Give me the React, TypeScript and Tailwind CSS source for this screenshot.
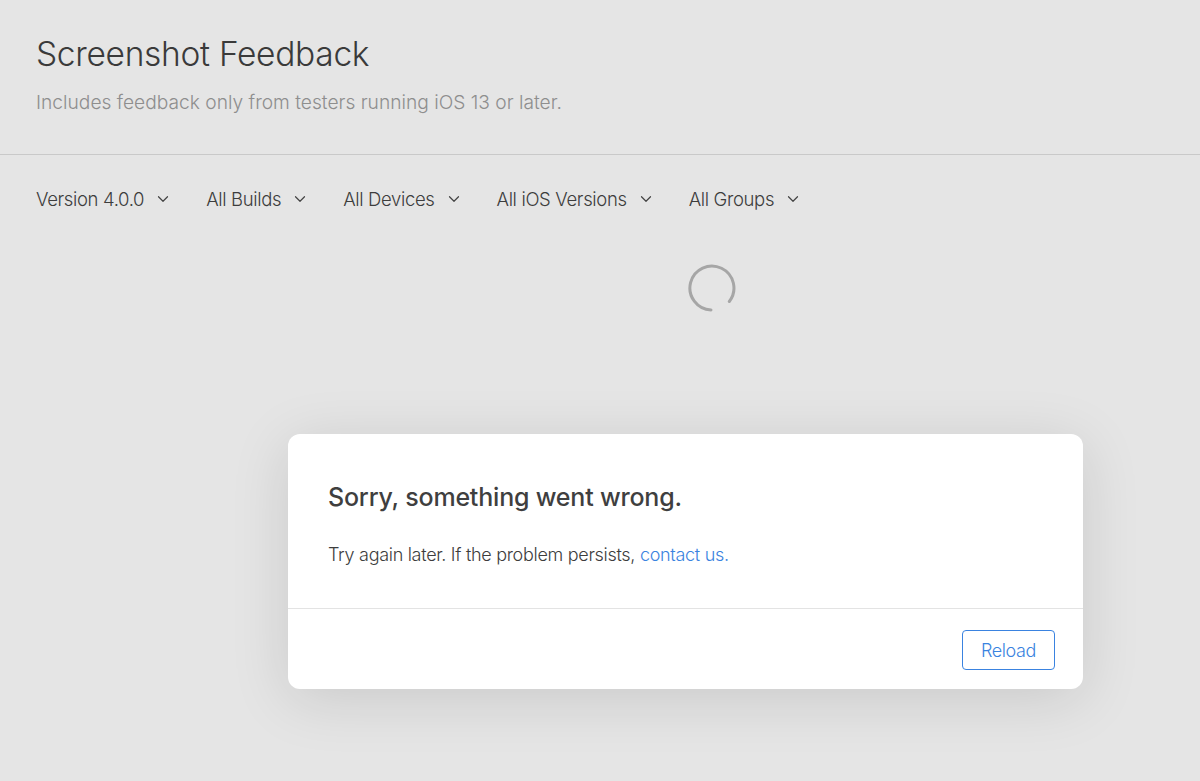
import { ChevronDown } from 'lucide-react';

const filters = ['Version 4.0.0', 'All Builds', 'All Devices', 'All iOS Versions', 'All Groups'];

function Spinner() {
  // open ring, gap toward the lower right
  return (
    <svg width="52" height="52" viewBox="0 0 52 52" fill="none">
      <path
        d="M25 48 A22 22 0 1 1 43.3 39.5"
        stroke="#a6a6a6"
        strokeWidth="3"
        strokeLinecap="round"
      />
    </svg>
  );
}

export default function App() {
  return (
    <div
      className="relative h-[781px] w-[1200px] overflow-hidden bg-[#e5e5e5] text-[#3d3d3d]"
      style={{ fontFamily: 'Inter, "Noto Sans", sans-serif' }}
    >
      <header className="border-b border-[#c9c9c9] px-9 pt-[32px] pb-[38px]">
        <h1 className="text-[33.5px] font-light leading-[44px] tracking-[-0.3px] text-[#3a3a3a]">
          Screenshot Feedback
        </h1>
        <p className="mt-[12px] text-[19.2px] font-light leading-[28px] text-[#8e8e8e]">
          Includes feedback only from testers running iOS 13 or later.
        </p>
      </header>

      <nav className="flex items-center gap-[34px] px-9 pt-[30px]">
        {filters.map((f) => (
          <button
            key={f}
            className="flex items-center gap-[10px] text-[18.5px] font-light leading-[28px] tracking-[-0.35px] text-[#3d3d3d]"
          >
            {f}
            <ChevronDown className="h-[18px] w-[18px] text-[#444]" strokeWidth={1.6} />
          </button>
        ))}
      </nav>

      <div className="flex justify-center pt-[49px] pl-[224px]">
        <Spinner />
      </div>

      <div className="absolute left-[288px] top-[434px] w-[795px] rounded-[12px] bg-white shadow-[0_10px_60px_rgba(0,0,0,0.12)]">
        <div className="px-10 pt-[47px] pb-[39px]">
          <h2 className="text-[25px] font-medium leading-[32px] tracking-[-0.2px] text-[#3f3f3f]">
            Sorry, something went wrong.
          </h2>
          <p className="mt-[28px] text-[18px] font-light leading-[28px] tracking-[-0.3px] text-[#3d3d3d]">
            Try again later. If the problem persists,{' '}
            <a className="text-[#3a83e0]">contact us.</a>
          </p>
        </div>
        <div className="flex justify-end border-t border-[#e3e3e3] px-[28px] pt-[21px] pb-[19px]">
          <button className="h-[40px] w-[93px] rounded-[4px] border border-[#3a83e0] text-[18px] font-light tracking-[-0.4px] text-[#3a83e0]">
            Reload
          </button>
        </div>
      </div>
    </div>
  );
}
